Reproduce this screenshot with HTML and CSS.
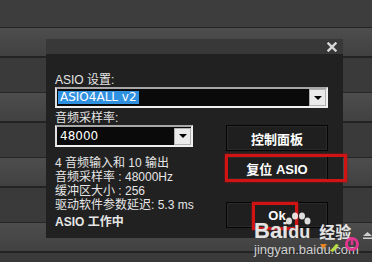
FILE: index.html
```html
<!DOCTYPE html>
<html>
<head>
    <title>ASIO 设置</title>
    <link rel="stylesheet" href="styles.css">
</head>
<body>
    <div class="screen">
        <div class="list">
            <div class="row-top"></div>
            <div class="row-band"></div><div class="row-plain"></div>
            <div class="row-band"></div><div class="row-plain"></div>
            <div class="row-band"></div><div class="row-plain"></div>
            <div class="row-band"></div><div class="row-plain"></div>
        </div>

        <div class="dialog">
            <div class="titlebar">
                <svg class="close" width="10" height="10" viewBox="0 0 10 10">
                    <path d="M1.5 1.5 L8.5 8.5 M8.5 1.5 L1.5 8.5" stroke="#d8d8d8" stroke-width="2.4" stroke-linecap="square"/>
                </svg>
            </div>
            <div class="body">
                <div class="label">ASIO 设置:</div>
                <div class="combo combo-wide">
                    <span class="value selected">ASIO4ALL v2</span>
                    <span class="drop"><i></i></span>
                </div>

                <div class="label label-gap">音频采样率:</div>
                <div class="columns">
                    <div class="left">
                        <div class="combo combo-small">
                            <span class="value">48000</span>
                            <span class="drop"><i></i></span>
                        </div>
                        <div class="info">
                            <div>4 音频输入和 10 输出</div>
                            <div>音频采样率 : 48000Hz</div>
                            <div>缓冲区大小 : 256</div>
                            <div>驱动软件参数延迟: 5.3 ms</div>
                            <div class="status">ASIO 工作中</div>
                        </div>
                    </div>
                    <div class="right">
                        <div class="btn btn-panel">控制面板</div>
                        <div class="btn btn-reset">复位 ASIO</div>
                        <div class="btn btn-ok">Ok</div>
                    </div>
                </div>
            </div>
        </div>

        <div class="mark mark-reset"></div>
        <div class="mark mark-ok"></div>

        <div class="watermark">
            <div class="wm-top">
                <span class="wm-bai">Bai</span><span class="wm-du">du<svg class="paw" width="26" height="14" viewBox="0 0 26 14">
                        <ellipse cx="4" cy="9" rx="3" ry="3.6" fill="#fff"/>
                        <ellipse cx="10" cy="4" rx="3" ry="3.6" fill="#fff"/>
                        <ellipse cx="17" cy="4" rx="3" ry="3.6" fill="#fff"/>
                        <ellipse cx="22.5" cy="9" rx="3" ry="3.6" fill="#fff"/>
                    </svg></span><span class="wm-jy">经验</span>
            </div>
            <div class="wm-url">jingyan.baidu.com</div>
            <svg class="wm-deco" width="20" height="8" viewBox="0 0 20 8">
                <path d="M0 0 L7 0 L3.5 5 Z" fill="#e8821e"/>
                <path d="M10 7 L16 0 L19 1 L13 8 Z" fill="#b8e040"/>
            </svg>
        </div>
        <svg class="wm-ring" width="16" height="16" viewBox="0 0 16 16">
            <circle cx="8" cy="8" r="5.5" fill="none" stroke="#e0358e" stroke-width="3"/>
            <path d="M8 3 L8 9" stroke="#e0358e" stroke-width="2.5"/>
        </svg>
        <svg class="eject" width="9" height="7" viewBox="0 0 9 7">
            <path d="M4.5 0 L9 4 L0 4 Z" fill="#cfcfcf"/>
            <rect x="0" y="5.5" width="9" height="1.5" fill="#cfcfcf"/>
        </svg>
    </div>
</body>
</html>
```

FILE: styles.css
```css
html, body {
    margin: 0;
    padding: 0;
}

body {
    width: 372px;
    height: 262px;
    overflow: hidden;
    background: #3a3a3a;
    font-family: "Liberation Sans", "Noto Sans CJK SC", sans-serif;
    font-size: 12px;
    color: #e6e6e6;
}

.screen {
    position: relative;
    width: 372px;
    height: 262px;
    overflow: hidden;
}

/* background list rows */
.list {
    display: flex;
    flex-direction: column;
}

.row-top {
    height: 27px;
    background: #3d3d3d;
    border-bottom: 1px solid #242424;
}

.row-band {
    height: 28px;
    background: linear-gradient(#4d4d4d, #414141);
    border-bottom: 2px solid #232323;
}

.row-plain {
    height: 34px;
    background: #3a3a3a;
    border-bottom: 1px solid #262626;
}

/* dialog */
.dialog {
    position: absolute;
    left: 46px;
    top: 39px;
    width: 297px;
    height: 199px;
    display: flex;
    flex-direction: column;
    background: #212121;
}

.titlebar {
    height: 15px;
    background: #383838;
    display: flex;
    justify-content: flex-end;
    align-items: center;
    padding-right: 6px;
}

.close {
    display: block;
    margin-top: 1px;
}

.body {
    padding: 19px 0 0 9px;
}

.label {
    line-height: 14px;
    height: 14px;
}

.label-gap {
    margin-top: 3px;
}

.combo {
    box-sizing: border-box;
    height: 21px;
    display: flex;
    align-items: center;
    justify-content: space-between;
    background: #0a0a0a;
    border: 2px solid #f0f0f0;
    border-top-color: #a8a8a8;
    border-left-color: #e0e0e0;
    font-family: "DejaVu Sans", "Noto Sans CJK SC", sans-serif;
    font-size: 12px;
    color: #fff;
}

.combo-wide {
    width: 273px;
}

.combo-small {
    width: 138px;
    height: 22px;
}

.value {
    margin-left: 1px;
    padding: 0 2px;
    line-height: 13px;
}

.selected {
    background: #3090e0;
}

.drop {
    box-sizing: border-box;
    width: 17px;
    height: 17px;
    background: #eaeaea;
    border: 1px solid #b0b0b0;
    display: flex;
    align-items: center;
    justify-content: center;
}

.drop i {
    width: 0;
    height: 0;
    border-left: 4px solid transparent;
    border-right: 4px solid transparent;
    border-top: 4px solid #000;
}

.columns {
    display: flex;
    gap: 33px;
}

.left {
    width: 138px;
}

.info {
    margin-top: 9px;
    line-height: 14px;
    white-space: nowrap;
}

.status {
    margin-top: 3px;
    font-weight: bold;
    font-size: 12px;
}

.right {
    display: flex;
    flex-direction: column;
    width: 102px;
}

.btn {
    box-sizing: border-box;
    display: flex;
    align-items: center;
    justify-content: center;
    background: #1f1f1f;
    border: 1px solid #050505;
    box-shadow: inset 0 0 0 1px #2a2a2a;
    color: #fff;
    font-weight: bold;
    font-size: 13px;
}

.btn-panel {
    height: 26px;
}

.btn-reset {
    height: 24px;
    margin-top: 5px;
}

.btn-ok {
    height: 26px;
    margin-top: 22px;
}

/* red annotation boxes */
.mark {
    position: absolute;
    box-sizing: border-box;
    border: 3px solid #d01414;
    box-shadow: 0 0 2px #a01010;
}

.mark-reset {
    left: 225px;
    top: 154px;
    width: 122px;
    height: 28px;
}

.mark-ok {
    left: 252px;
    top: 202px;
    width: 46px;
    height: 28px;
}

/* watermark */
.watermark {
    position: absolute;
    left: 254px;
    top: 218px;
    width: 110px;
    white-space: nowrap;
    font-family: "Liberation Sans", "Noto Sans CJK SC", sans-serif;
}

.wm-top {
    display: flex;
    align-items: flex-end;
    height: 25px;
    color: rgba(255, 255, 255, 0.85);
    text-shadow: 0 0 1px #555;
}

.wm-bai {
    font-size: 22px;
    font-weight: bold;
    line-height: 25px;
}

.wm-du {
    position: relative;
    font-size: 18px;
    font-weight: bold;
    line-height: 21px;
}

.paw {
    position: absolute;
    left: -3px;
    top: -10px;
    opacity: 0.85;
}

.wm-jy {
    margin-left: 9px;
    font-size: 16px;
    font-weight: bold;
    line-height: 21px;
}

.wm-url {
    font-size: 13px;
    line-height: 14px;
    color: #d0d0d0;
}

.wm-deco {
    position: absolute;
    left: 66px;
    top: 26px;
}

.wm-ring {
    position: absolute;
    left: 344px;
    top: 236px;
}

.eject {
    position: absolute;
    left: 363px;
    top: 232px;
}
```
